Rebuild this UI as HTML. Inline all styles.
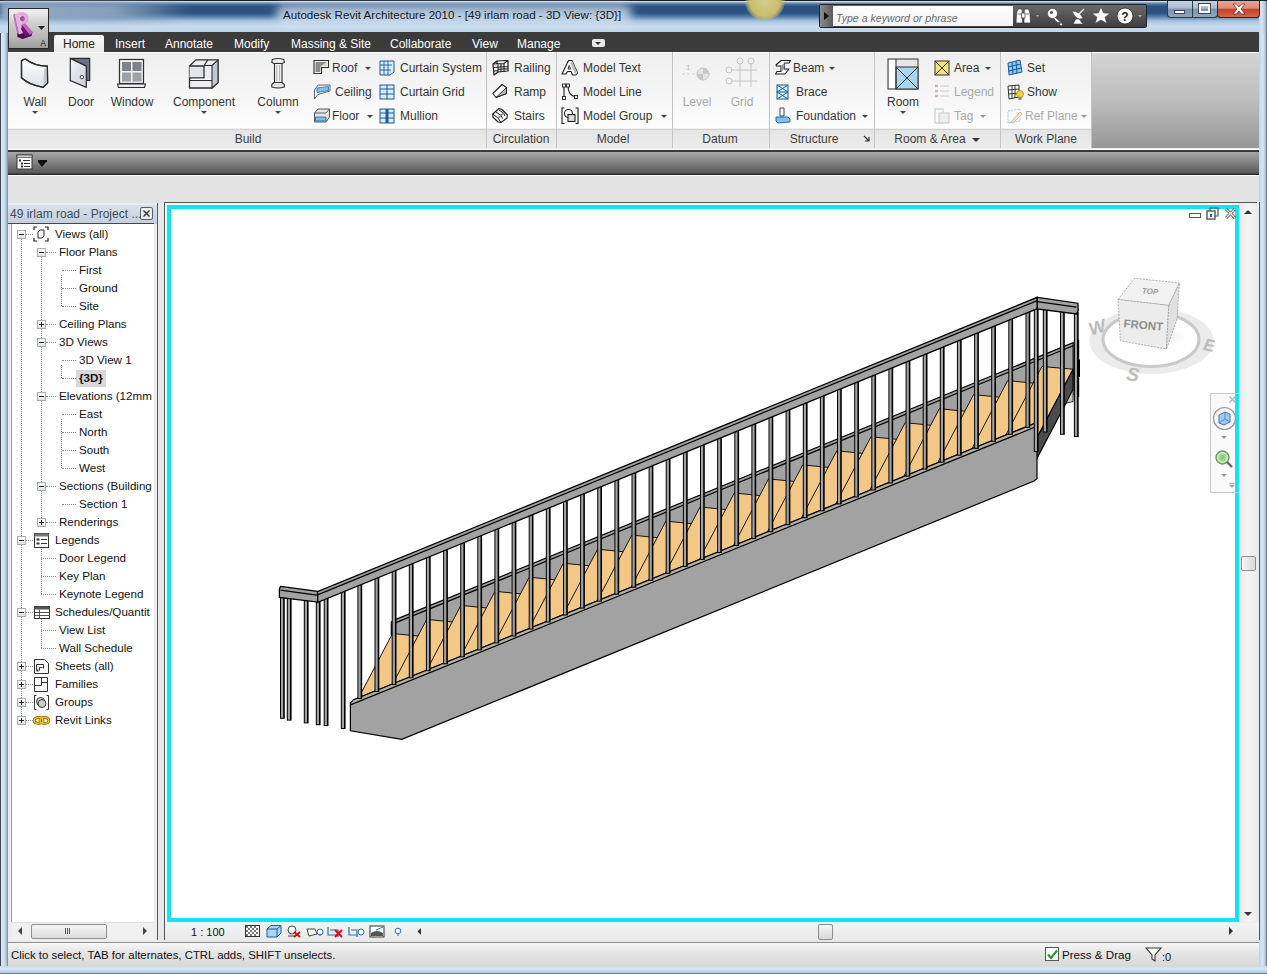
<!DOCTYPE html>
<html><head><meta charset="utf-8"><title>Revit</title>
<style>
*{margin:0;padding:0;box-sizing:border-box}
html,body{width:1267px;height:974px;overflow:hidden;background:#aac4dd}
body{position:relative;font-family:"Liberation Sans",sans-serif;font-size:12px;color:#222}
.a{position:absolute}
.t{position:absolute;white-space:nowrap;line-height:14px}
#frame{left:0;top:0;width:1267px;height:974px;background:linear-gradient(90deg,#3a4a5c 0,#3a4a5c 1px,#dbe8f5 1px,#cfe0f0 4px,#9fbad6 7px,#5d6f82 8px,#b7cee6 8px,#b7cee6 1259px,#c8dcf0 1260px,#d6e6f5 1263px,#9db8d4 1266px,#3a4a5c 1267px)}
#fbot{left:0;top:966px;width:1267px;height:8px;background:linear-gradient(180deg,#c6daee 0,#d8e8f6 3px,#a9c4de 7px,#2c3a48 8px)}
#title{left:0;top:0;width:1267px;height:33px;background:linear-gradient(180deg,#141c26 0,#141c26 1px,#cfdbe8 1.5px,#6f8fb2 3px,#2d5482 6px,#285081 13px,#5c84ad 17px,#a8c3df 21px,#c7dbef 26px,#bed4eb 33px)}
#tabbar{left:8px;top:32px;width:1251px;height:20px;background:#3b3b3b}
#ribbon{left:8px;top:52px;width:1251px;height:97px;background:linear-gradient(180deg,#fdfdfd 0,#fdfdfd 1px,#d4d4d4 1px,#bdbdbd 50%,#969696 100%)}
#qat{left:8px;top:148px;width:1251px;height:28px;background:linear-gradient(180deg,#e4e4e4 0,#fbfbfb 1px,#fbfbfb 2px,#3a3a3a 2px,#3a3a3a 3.5px,#a6a6a6 4px,#8a8a8a 12px,#5a5a5a 25px,#2c2c2c 26px,#2c2c2c 27px,#fafafa 27px)}
#gray1{left:8px;top:176px;width:1251px;height:27px;background:#e3e3e3}
#main{left:8px;top:203px;width:1251px;height:739px;background:#e9e9e9}
#status{left:8px;top:942px;width:1251px;height:25px;background:linear-gradient(180deg,#f7f7f7,#e6e6e6 40%,#d8d8d8);border-top:1px solid #8f8f8f;border-bottom:1px solid #6b7b8b}
.tab{top:36px;color:#fff;font-size:12px}
.pnl{top:52px;height:96px;background:linear-gradient(180deg,#fdfdfd 0,#fdfdfd 1px,#efefef 1px,#f5f5f5 40%,#fdfdfd 76px,#e4e4e4 77px,#ececec 96px)}
.sep{top:52px;width:1px;height:96px;background:#c3c3c3}
.lbl{top:132px;color:#3d3d3d;font-size:12px;text-align:center}
.rb{color:#353535;font-size:12px}
.dis{color:#a9a9a9}
.arr{position:absolute;width:0;height:0;border-left:3px solid transparent;border-right:3px solid transparent;border-top:3px solid #444}
.tree{color:#111;font-size:11.6px}
</style></head><body>
<div id="frame" class="a"></div>
<div id="title" class="a"></div>
<div class="a" style="left:0;top:2px;width:190px;height:18px;background:linear-gradient(90deg,rgba(160,182,204,.9) 0,rgba(150,172,196,.85) 60%,rgba(120,150,185,0) 100%);filter:blur(3px)"></div>
<div class="a" style="left:745px;top:-17px;width:40px;height:37px;border-radius:50%;background:radial-gradient(circle,#d4cc8c 0,#c9bd6c 55%,rgba(200,190,110,0.3) 72%,rgba(200,190,110,0) 76%)"></div>
<div class="a" style="left:276px;top:5px;width:356px;height:19px;border-radius:9px;background:rgba(214,228,242,.8);filter:blur(5px)"></div>
<div class="t t" style="left:283px;top:8px;color:#1a1a1a;font-size:11.6px">Autodesk Revit Architecture 2010 - [49 irlam road - 3D View: {3D}]</div>
<div class="a" style="left:819px;top:4px;width:328px;height:24px;background:linear-gradient(180deg,#6a6a6a,#3e3e3e);border:1px solid #222;border-radius:2px"></div>
<div class="a" style="left:820px;top:5px;width:13px;height:22px;background:linear-gradient(90deg,#8c8c8c,#5a5a5a)"></div>
<div class="a" style="left:824px;top:12px;width:0;height:0;border-top:4px solid transparent;border-bottom:4px solid transparent;border-left:5px solid #111"></div>
<div class="a" style="left:833px;top:6px;width:180px;height:20px;background:linear-gradient(180deg,#ffffff,#f4f4f4)"></div>
<div class="t t" style="left:836px;top:10px;color:#6a6a6a;font-style:italic;font-size:10.6px;top:11px">Type a keyword or phrase</div>
<svg class="a" style="left:1013px;top:5px" width="133" height="22" viewBox="0 0 133 22">
<g fill="#fff" stroke="#333" stroke-width="0.7">
<path d="M3.5 8 L5 4 L9 4 L9.5 8 L9.5 18 L3 18 Z"/><path d="M17 8 L15.5 4 L11.5 4 L11 8 L11 18 L17.5 18 Z"/>
<rect x="8.5" y="8" width="3.5" height="5"/>
</g>
<path d="M4.5 9 L8 9 M12.5 9 L16 9" stroke="#777" stroke-width="1"/>
<path d="M23 10 l3 0 l-1.5 2 z" fill="#aaa"/>
<g fill="#fff" stroke="#333" stroke-width="0.6"><path d="M42 12 L50 19.5 L48 21 L46.5 19.5 L47.5 18 L46 17 L45 18 L40 13 Z"/><circle cx="39.5" cy="8.5" r="5"/></g>
<circle cx="38.5" cy="7.5" r="1.6" fill="#555"/>
<g fill="#fff" stroke="#333" stroke-width="0.5"><path d="M59 6 Q66 6 70 13 Q64 17 59 6 Z"/><path d="M63 14 L60 19 L70 19 L66 14 Z"/><path d="M66 9 L71 4" stroke="#fff" stroke-width="1.2"/></g>
<path d="M88 2 L90.6 8 L97 8.2 L92 12.2 L93.8 18.5 L88 15 L82.2 18.5 L84 12.2 L79 8.2 L85.4 8 Z" fill="#fff" stroke="#333" stroke-width="0.5"/>
<circle cx="112" cy="11" r="8" fill="#fff" stroke="#222" stroke-width="0.8"/>
<text x="112" y="15.5" font-family="Liberation Sans" font-weight="bold" font-size="12" text-anchor="middle" fill="#222">?</text>
<path d="M125 10 l4 0 l-2 2.5 z" fill="#aaa"/>
</svg>
<div class="a" style="left:1259px;top:0;width:8px;height:33px;background:linear-gradient(90deg,#c4d8ec,#d6e6f5 3px,#9db8d4 7px,#3a4a5c 8px);border-top:1px solid #141c26"></div>
<div class="a" style="left:1167px;top:1px;width:51px;height:17px;border:1px solid #2e3a48;border-top:none;border-radius:0 0 4px 4px;background:linear-gradient(180deg,#c4d2e0 0,#a9bbcf 45%,#7a92ac 50%,#8ea7c0 100%)"></div>
<div class="a" style="left:1192px;top:1px;width:1px;height:16px;background:#2e3a48"></div>
<div class="a" style="left:1217px;top:1px;width:43px;height:17px;border:1px solid #3a2420;border-top:none;border-radius:0 0 4px 4px;background:linear-gradient(180deg,#e8a595 0,#e08a78 45%,#c4402a 52%,#d4654c 100%)"></div>
<div class="a" style="left:1174px;top:10px;width:11px;height:4px;background:#fff;border:1px solid #445"></div>
<div class="a" style="left:1199px;top:4px;width:11px;height:9px;border:2px solid #fff;outline:1px solid #445"></div>
<svg class="a" style="left:1232px;top:3px" width="14" height="12"><path d="M1 1 L4.5 1 L7 4 L9.5 1 L13 1 L9 6 L13 11 L9.5 11 L7 8 L4.5 11 L1 11 L5 6 Z" fill="#fff" stroke="#5a2418" stroke-width="0.7"/></svg>
<div id="tabbar" class="a"></div>
<div class="a" style="left:54px;top:35px;width:50px;height:17px;background:linear-gradient(180deg,#f8f8f8,#e9e9e9);border-radius:2px 2px 0 0"></div>
<div class="t t tab" style="left:63px;top:37px;color:#222">Home</div>
<div class="t t tab" style="left:115px;top:37px;">Insert</div>
<div class="t t tab" style="left:165px;top:37px;">Annotate</div>
<div class="t t tab" style="left:234px;top:37px;">Modify</div>
<div class="t t tab" style="left:291px;top:37px;">Massing &amp; Site</div>
<div class="t t tab" style="left:390px;top:37px;">Collaborate</div>
<div class="t t tab" style="left:472px;top:37px;">View</div>
<div class="t t tab" style="left:517px;top:37px;">Manage</div>
<div class="a" style="left:592px;top:39px;width:13px;height:8px;background:#e8e8e8;border-radius:2px"></div>
<div class="a" style="left:595px;top:42px;width:0;height:0;border-left:3.5px solid transparent;border-right:3.5px solid transparent;border-top:3px solid #333"></div>
<div class="a" style="left:8px;top:8px;width:41px;height:41px;background:#262626"></div>
<div class="a" style="left:9px;top:9px;width:39px;height:39px;background:linear-gradient(180deg,#f0f0f0 0,#e6e6e6 6px,#cfcfcf 14px,#b9b9b9 28px,#9c9c9c 39px)"></div>
<svg class="a" style="left:9px;top:9px" width="39" height="39" viewBox="0 0 39 39">
<defs><filter id="bl" x="-30%" y="-30%" width="160%" height="160%"><feGaussianBlur stdDeviation="0.6"/></filter>
<linearGradient id="rg" x1="0" y1="0" x2="0.6" y2="1"><stop offset="0" stop-color="#f2c0ee"/><stop offset="0.4" stop-color="#d27ccb"/><stop offset="0.7" stop-color="#9a3a92"/><stop offset="1" stop-color="#5a1058"/></linearGradient></defs>
<g filter="url(#bl)" transform="translate(0.5,1)">
<path d="M7 17 L13 15 L23 22 L22 26 L13 29 L8 27 Z" fill="#4e0a4c"/>
<path d="M3.5 5 L5.5 3.5 L9.5 24 L7.5 23 Z" fill="#b878b4"/>
<path d="M5.5 3.5 L9.5 3 L13.5 23 L9.5 24.5 Z" fill="#eab0e6"/>
<path d="M8.5 2.6 L14 2.6 Q19.5 3.8 19 9 Q18.5 13.5 13.5 15.5 L11.5 11.5 Q15 10.5 14.8 7.8 Q14.3 6 11 6 Z" fill="#e6a4e0"/>
<ellipse cx="12.8" cy="8.6" rx="2.3" ry="2.7" fill="#9a5892"/>
<path d="M12 14.5 L16 13.5 L23.5 22.5 L20 25 Z" fill="#c462ba"/>
<path d="M12.5 16 L20 25 L15.5 26 L11.5 19 Z" fill="#6c1868"/>
</g>
<path d="M29 17 L36 17 L32.5 21 Z" fill="#2a2a2a"/>
<text x="34" y="37" font-family="Liberation Sans" font-size="8.5" fill="#1a1a1a" text-anchor="middle">A</text>
</svg>
<div id="ribbon" class="a"></div>
<div class="a pnl" style="left:8px;width:478px"></div>
<div class="a pnl" style="left:486px;width:70px"></div>
<div class="a pnl" style="left:556px;width:116px"></div>
<div class="a pnl" style="left:672px;width:97px"></div>
<div class="a pnl" style="left:769px;width:105px"></div>
<div class="a pnl" style="left:874px;width:126px"></div>
<div class="a pnl" style="left:1000px;width:91px"></div>
<div class="a sep" style="left:486px"></div>
<div class="a sep" style="left:556px"></div>
<div class="a sep" style="left:672px"></div>
<div class="a sep" style="left:769px"></div>
<div class="a sep" style="left:874px"></div>
<div class="a sep" style="left:1000px"></div>
<div class="a sep" style="left:1091px"></div>
<div class="a" style="left:8px;top:129px;width:1083px;height:1px;background:#d2d2d2"></div>
<div class="t lbl" style="left:188px;width:120px">Build</div>
<div class="t lbl" style="left:461px;width:120px">Circulation</div>
<div class="t lbl" style="left:553px;width:120px">Model</div>
<div class="t lbl" style="left:660px;width:120px">Datum</div>
<div class="t lbl" style="left:754px;width:120px">Structure</div>
<div class="t lbl" style="left:870px;width:120px">Room &amp; Area</div>
<div class="t lbl" style="left:986px;width:120px">Work Plane</div>
<div class="arr" style="left:972px;top:138px;border-left-width:4px;border-right-width:4px;border-top:4px solid #333"></div>
<svg class="a" style="left:863px;top:135px" width="8" height="8" viewBox="0 0 8 8"><path d="M1 1 L6 6 M6 2 L6 6 L2 6" stroke="#333" stroke-width="1.2" fill="none"/></svg>
<svg class="a" style="left:20px;top:57px" width="30" height="32" viewBox="0 0 30 32"><defs><linearGradient id="wg" x1="0" y1="0" x2="0" y2="1"><stop offset="0" stop-color="#ffffff"/><stop offset="1" stop-color="#dde0e6"/></linearGradient></defs><path d="M1.5 4 Q3 2 5.5 2.1 Q14 9 27.3 9.2 L27.6 25.9 L23.2 30.3 Q9 28 1.5 20.8 Z" fill="url(#wg)" stroke="#2e2e2e" stroke-width="1.3"/><path d="M24 13.3 L27.3 9.2 L27.6 25.9 L23.2 30.3 Z" fill="#c4c9d2"/><path d="M2.5 5.5 Q10 11 24 13.3" stroke="#fff" stroke-width="1" fill="none"/><path d="M1.5 4 Q3 2 5.5 2.1 Q14 9 27.3 9.2 L27.6 25.9 L23.2 30.3 Q9 28 1.5 20.8 Z" fill="none" stroke="#2e2e2e" stroke-width="1.3"/></svg>
<svg class="a" style="left:69px;top:57px" width="24" height="32" viewBox="0 0 24 32"><path d="M1.3 1.4 L20.7 1.4 L20.7 23.5 L17.6 23.5 L17.3 9.2 Z" fill="#6c7282" stroke="#2e2e2e" stroke-width="1.2"/><defs><linearGradient id="dg" x1="0" y1="0" x2="1" y2="1"><stop offset="0" stop-color="#f4f5f8"/><stop offset="1" stop-color="#c8ccd4"/></linearGradient></defs><path d="M1.3 1.4 L17.3 9.2 L17.3 30.3 L1.3 23.5 Z" fill="url(#dg)" stroke="#2e2e2e" stroke-width="1.2"/><circle cx="12.9" cy="20.1" r="1.7" fill="#fff" stroke="#333" stroke-width="0.9"/></svg>
<svg class="a" style="left:116px;top:57px" width="32" height="33" viewBox="0 0 32 33"><rect x="3.5" y="2.5" width="24" height="24" fill="#f2f2f2" stroke="#2e2e2e" stroke-width="1.2"/><rect x="6" y="5" width="9" height="9" fill="#7d828c"/><rect x="16.5" y="5" width="9" height="9" fill="#7d828c"/><rect x="6" y="15.5" width="9" height="9" fill="#9da2aa"/><rect x="16.5" y="15.5" width="9" height="9" fill="#9da2aa"/><path d="M1.5 27 L29.5 27 L28.5 30.5 L2.5 30.5 Z" fill="#eeeeee" stroke="#2e2e2e" stroke-width="1.1"/></svg>
<svg class="a" style="left:187px;top:57px" width="34" height="33" viewBox="0 0 34 33"><path d="M2.5 9 L8.9 2.9 L31 2.9 L31 25.6 L25 31 L2.5 31 Z" fill="#eceef2" stroke="#2e2e2e" stroke-width="1.3" stroke-linejoin="round"/><path d="M25 8.5 L31 2.9 L31 25.6 L25 31 Z" fill="#c3c8d0" stroke="#2e2e2e" stroke-width="1.1"/><path d="M17 8.5 L25 8.5" stroke="#2e2e2e" stroke-width="1.1"/><path d="M2.5 9 L17 9 L17 21 L2.5 21" fill="#e2e5ea" stroke="#2e2e2e" stroke-width="1.3"/><path d="M17 9 L20.6 2.9" stroke="#2e2e2e" stroke-width="1.1"/><path d="M2.5 23.5 L25 23.5" stroke="#2e2e2e" stroke-width="1"/><path d="M4 22.2 L24 22.2" stroke="#fff" stroke-width="1.2"/></svg>
<svg class="a" style="left:270px;top:57px" width="16" height="33" viewBox="0 0 16 33"><path d="M2.3 2.5 Q8 0.5 13.8 2.5 L14.3 5.5 L12 6.5 L4 6.5 L1.8 5.5 Z" fill="#f0f0f0" stroke="#2e2e2e" stroke-width="1.1"/><rect x="4.5" y="6.5" width="7.5" height="19" fill="#f6f6f6" stroke="#2e2e2e" stroke-width="1.1"/><path d="M6.8 8 L6.8 24 M9.6 8 L9.6 24" stroke="#9a9a9a" stroke-width="0.8"/><path d="M4 25.5 L12 25.5 L14.3 27.5 L14.3 30 Q8 32 1.8 30 L1.8 27.5 Z" fill="#e4e4e4" stroke="#2e2e2e" stroke-width="1.1"/></svg>
<div class="t rb" style="left:-5px;top:95px;width:80px;text-align:center">Wall</div>
<div class="arr" style="left:32px;top:111px;border-left-width:3px;border-right-width:3px;border-top:3px solid #444"></div>
<div class="t rb" style="left:41px;top:95px;width:80px;text-align:center">Door</div>
<div class="t rb" style="left:92px;top:95px;width:80px;text-align:center">Window</div>
<div class="t rb" style="left:164px;top:95px;width:80px;text-align:center">Component</div>
<div class="arr" style="left:201px;top:111px;border-left-width:3px;border-right-width:3px;border-top:3px solid #444"></div>
<div class="t rb" style="left:238px;top:95px;width:80px;text-align:center">Column</div>
<div class="arr" style="left:275px;top:111px;border-left-width:3px;border-right-width:3px;border-top:3px solid #444"></div>
<svg class="a" style="left:313px;top:59px" width="18" height="17" viewBox="0 0 18 17"><path d="M1 1.5 L15.5 1.5 L15.5 8.5 L8.5 8.5 L8.5 14.5 L1 14.5 Z" fill="#f4f4f4" stroke="#2e2e2e" stroke-width="1.1"/><path d="M2.5 3 L14 3 L7.5 7.5 L7 13 L2.5 13 Z" fill="#8a8a8a"/><path d="M14 3 L14 7 L7.5 7.5 Z" fill="#d8d8d8"/></svg>
<div class="t rb " style="left:332px;top:61px">Roof</div>
<div class="arr" style="left:365px;top:67px;border-left-width:3px;border-right-width:3px;border-top:3px solid #444"></div>
<svg class="a" style="left:313px;top:83px" width="18" height="17" viewBox="0 0 18 17"><path d="M1.5 7 L5 2 L17 2 L17 8 L5 11.5 L1.5 16 Z" fill="#f0f4f8" stroke="#555" stroke-width="0.9"/><path d="M4 5 L15.5 3.5 L15.5 7.5 L4 9.5 Z" fill="#6ab8ee" stroke="#1c5b9c" stroke-width="0.7"/><path d="M5 6 L15 4.5 M5 8 L15 6.5" stroke="#dff" stroke-width="0.5" stroke-dasharray="1 1"/></svg>
<div class="t rb " style="left:335px;top:85px">Ceiling</div>
<svg class="a" style="left:313px;top:107px" width="18" height="17" viewBox="0 0 18 17"><path d="M1.5 6 L5 2 L16.5 2 L16.5 10 L13 15 L1.5 15 Z" fill="#e4e4e4" stroke="#444" stroke-width="0.9"/><path d="M1.5 6 L13 6 L16.5 2" fill="none" stroke="#444" stroke-width="0.8"/><path d="M2.5 10 L13 10 L13 14 L2.5 14 Z" fill="#6ab8ee" stroke="#1c5b9c" stroke-width="0.7"/><path d="M3.5 12 L12 12" stroke="#dff" stroke-width="0.6" stroke-dasharray="1 1"/></svg>
<div class="t rb " style="left:332px;top:109px">Floor</div>
<div class="arr" style="left:367px;top:115px;border-left-width:3px;border-right-width:3px;border-top:3px solid #444"></div>
<svg class="a" style="left:378px;top:59px" width="18" height="17" viewBox="0 0 18 17"><path d="M2 2 L16 2 L16 13 L12 16 L2 16 Z" fill="#d8ecfa" stroke="#1c5b9c" stroke-width="1"/><path d="M2 6 L14 6 M2 11 L13 11 M6 2 L6 16 M10 2 L10 16" stroke="#1c5b9c" stroke-width="0.9"/></svg>
<div class="t rb " style="left:400px;top:61px">Curtain System</div>
<svg class="a" style="left:378px;top:83px" width="18" height="17" viewBox="0 0 18 17"><rect x="2" y="2" width="14" height="14" fill="#d8ecfa" stroke="#1c5b9c"/><path d="M2 6 L16 6 M2 11 L16 11 M9 2 L9 16" stroke="#1c5b9c"/></svg>
<div class="t rb " style="left:400px;top:85px">Curtain Grid</div>
<svg class="a" style="left:378px;top:107px" width="18" height="17" viewBox="0 0 18 17"><rect x="2" y="2" width="14" height="14" fill="#d8ecfa" stroke="#1c5b9c"/><path d="M2 6 L16 6 M2 11 L16 11" stroke="#1c5b9c"/><rect x="7.5" y="2" width="3" height="14" fill="#1c5b9c"/></svg>
<div class="t rb " style="left:400px;top:109px">Mullion</div>
<svg class="a" style="left:492px;top:59px" width="18" height="17" viewBox="0 0 18 17"><path d="M1 5 L5 2 L16 1.5 L16 12 L6 13 L2 16 Z" fill="#f6f6f6" stroke="#1e1e1e" stroke-width="1.2" stroke-linejoin="round"/><path d="M1 5 L12 4.5 L16 1.5 M5 2 L5 4.8 M12 4.5 L12 12.5 M6 5 L6 13 M9 4.7 L9 12.7 M6 8 L16 7.8 M2 8.5 L6 8 M2 12 L6 11.5 M6 10.3 L16 10" stroke="#1e1e1e" stroke-width="1.1" fill="none"/></svg>
<div class="t rb " style="left:514px;top:61px">Railing</div>
<svg class="a" style="left:492px;top:83px" width="18" height="17" viewBox="0 0 18 17"><path d="M0.8 10.5 L10 1.5 L14.5 4.5 L14.5 10.5 L4 14.5 Z" fill="#f8f8f8" stroke="#1e1e1e" stroke-width="1.1" stroke-linejoin="round"/><path d="M4 14.5 L14.5 4.5 L14.5 10.5 Z" fill="#b4b4b4" stroke="#1e1e1e" stroke-width="0.9"/></svg>
<div class="t rb " style="left:514px;top:85px">Ramp</div>
<svg class="a" style="left:492px;top:107px" width="18" height="17" viewBox="0 0 18 17"><path d="M0.8 7 L7 1.5 L10 2.5 L15.5 8 L15 11 L9 15.5 L6 15 L0.8 10 Z" fill="#f6f6f6" stroke="#1e1e1e" stroke-width="1.1" stroke-linejoin="round"/><path d="M0.8 7 L6 11 L9 15.5 M4 5 L9 8.5 L10.5 11.5 M7 3 L11.5 6 L13 9" stroke="#1e1e1e" stroke-width="1" fill="none"/><path d="M6 11 L9 8.5 M9 8.5 L11.5 6" stroke="#888" stroke-width="1.6"/></svg>
<div class="t rb " style="left:514px;top:109px">Stairs</div>
<svg class="a" style="left:561px;top:59px" width="18" height="17" viewBox="0 0 18 17"><path d="M1 15 L7.5 1.5 L11 1.5 L16.5 14 L14.5 16 L11.5 16 L10 12.5 L6.5 12.5 L5 15 Z" fill="#f8f8f8" stroke="#1e1e1e" stroke-width="1.1" stroke-linejoin="round"/><path d="M11 1.5 L16.5 14 L14.5 16 L9.5 4.5 Z" fill="#b8bcc4"/><path d="M7 10 L9.5 10 L8.2 6.5 Z" fill="#fff" stroke="#1e1e1e" stroke-width="0.9"/></svg>
<div class="t rb " style="left:583px;top:61px">Model Text</div>
<svg class="a" style="left:561px;top:83px" width="18" height="17" viewBox="0 0 18 17"><path d="M3 3 L3 14 M7 3 Q7 12 14.5 14" stroke="#1e1e1e" fill="none" stroke-width="1.1"/><rect x="1.5" y="1" width="3" height="3" fill="#fff" stroke="#1e1e1e" stroke-width="0.9"/><rect x="5.5" y="1" width="3" height="3" fill="#fff" stroke="#1e1e1e" stroke-width="0.9"/><rect x="1.5" y="13.5" width="3" height="3" fill="#fff" stroke="#1e1e1e" stroke-width="0.9"/><rect x="13.5" y="12.5" width="3" height="3" fill="#fff" stroke="#1e1e1e" stroke-width="0.9"/></svg>
<div class="t rb " style="left:583px;top:85px">Model Line</div>
<svg class="a" style="left:561px;top:107px" width="18" height="17" viewBox="0 0 18 17"><path d="M3.5 1 L1 1 L1 16.5 L3.5 16.5 M14.5 1 L17 1 L17 16.5 L14.5 16.5" stroke="#1e1e1e" fill="none" stroke-width="1.1"/><circle cx="7.5" cy="6.5" r="4" fill="#fff" stroke="#1e1e1e" stroke-width="1.1"/><rect x="7" y="7.5" width="7" height="7" fill="#dcdcdc" stroke="#1e1e1e" stroke-width="1.1"/></svg>
<div class="t rb " style="left:583px;top:109px">Model Group</div>
<div class="arr" style="left:661px;top:115px;border-left-width:3px;border-right-width:3px;border-top:3px solid #444"></div>
<svg class="a" style="left:682px;top:58px" width="32" height="30" viewBox="0 0 32 30"><text x="4" y="12" font-size="8" fill="#bbb" font-family="Liberation Sans">1</text><path d="M0 16 L30 16" stroke="#ccc" stroke-dasharray="3 2"/><circle cx="21" cy="16" r="6" fill="#e4e4e4" stroke="#c4c4c4"/><path d="M21 10 L21 16 L27 16 A6 6 0 0 0 21 10 Z M21 16 L15 16 A6 6 0 0 0 21 22 Z" fill="#c8c8c8"/></svg>
<svg class="a" style="left:725px;top:57px" width="34" height="32" viewBox="0 0 34 32"><circle cx="15" cy="4" r="3" fill="none" stroke="#c4c4c4"/><circle cx="26" cy="4" r="3" fill="none" stroke="#c4c4c4"/><circle cx="4" cy="13" r="3" fill="none" stroke="#c4c4c4"/><circle cx="4" cy="24" r="3" fill="none" stroke="#c4c4c4"/><path d="M15 7 L15 30 M26 7 L26 30 M7 13 L32 13 M7 24 L32 24" stroke="#c4c4c4"/></svg>
<div class="t rb dis" style="left:657px;top:95px;width:80px;text-align:center">Level</div>
<div class="t rb dis" style="left:702px;top:95px;width:80px;text-align:center">Grid</div>
<svg class="a" style="left:774px;top:59px" width="18" height="17" viewBox="0 0 18 17"><path d="M2 6 L7 1.5 L16.5 1.5 L15 4 L10.5 4 L10.5 10 L15 10 L11 15 L1.5 15 L3 12.5 L7 12.5 L7 7 L2.5 7 Z" fill="#f8f8f8" stroke="#1e1e1e" stroke-width="1.1" stroke-linejoin="round"/><path d="M7 7 L10.5 4 L10.5 10 L7 12.5 Z" fill="#8a9aaa"/></svg>
<div class="t rb " style="left:793px;top:61px">Beam</div>
<div class="arr" style="left:829px;top:67px;border-left-width:3px;border-right-width:3px;border-top:3px solid #444"></div>
<svg class="a" style="left:774px;top:83px" width="18" height="17" viewBox="0 0 18 17"><rect x="3" y="2" width="11" height="14" fill="#d8ecfa" stroke="#1c5b9c"/><path d="M3 9 L14 9 M3 2 L14 9 L3 16 M14 2 L3 9 L14 16" stroke="#1c5b9c" fill="none"/></svg>
<div class="t rb " style="left:796px;top:85px">Brace</div>
<svg class="a" style="left:774px;top:107px" width="18" height="17" viewBox="0 0 18 17"><path d="M6 1 L10 1 L10 9 L6 9 Z" fill="#fff" stroke="#333" stroke-width="0.9"/><path d="M2 10 L14 10 L16 12 L16 15 L4 16 L2 14 Z" fill="#7fc2ee" stroke="#1c5b9c" stroke-width="0.9"/></svg>
<div class="t rb " style="left:796px;top:109px">Foundation</div>
<div class="arr" style="left:862px;top:115px;border-left-width:3px;border-right-width:3px;border-top:3px solid #444"></div>
<svg class="a" style="left:886px;top:57px" width="34" height="34" viewBox="0 0 34 34"><rect x="2" y="2" width="30" height="30" fill="#e6e6e6" stroke="#333"/><rect x="10" y="10" width="22" height="22" fill="#a9d5ee" stroke="#333"/><path d="M10 10 L32 32 M32 10 L10 32 M10 2 L10 32" stroke="#333" fill="none"/><rect x="3" y="3" width="6" height="28" fill="#fff"/></svg>
<div class="t rb" style="left:863px;top:95px;width:80px;text-align:center">Room</div>
<div class="arr" style="left:900px;top:111px;border-left-width:3px;border-right-width:3px;border-top:3px solid #444"></div>
<svg class="a" style="left:933px;top:59px" width="18" height="17" viewBox="0 0 18 17"><rect x="2" y="2" width="14" height="14" fill="#f4e27a" stroke="#333"/><path d="M2 2 L16 16 M16 2 L2 16" stroke="#333"/></svg>
<div class="t rb " style="left:954px;top:61px">Area</div>
<div class="arr" style="left:985px;top:67px;border-left-width:3px;border-right-width:3px;border-top:3px solid #444"></div>
<svg class="a" style="left:933px;top:83px" width="18" height="17" viewBox="0 0 18 17"><path d="M2 3 L5 3 M2 8 L5 8 M2 13 L5 13" stroke="#e0b0b0" stroke-width="2.5"/><path d="M7 3 L16 3 M7 8 L16 8 M7 13 L16 13" stroke="#c8c8c8"/></svg>
<div class="t rb dis" style="left:954px;top:85px">Legend</div>
<svg class="a" style="left:933px;top:107px" width="18" height="17" viewBox="0 0 18 17"><rect x="2" y="2" width="8" height="14" fill="none" stroke="#c4c4c4"/><rect x="6" y="6" width="10" height="10" fill="#eee" stroke="#c4c4c4"/></svg>
<div class="t rb dis" style="left:954px;top:109px">Tag</div>
<div class="arr" style="left:980px;top:115px;border-left-width:3px;border-right-width:3px;border-top:3px solid #9a9a9a"></div>
<svg class="a" style="left:1006px;top:59px" width="18" height="17" viewBox="0 0 18 17"><path d="M2 4 L14 1 L16 13 L3 16 Z" fill="#8cc8ef" stroke="#1c5b9c"/><path d="M2 8 L15 5 M2.5 12 L15.5 9 M6 3 L7 15 M10 2 L11 14" stroke="#1c5b9c"/></svg>
<div class="t rb " style="left:1027px;top:61px">Set</div>
<svg class="a" style="left:1006px;top:83px" width="18" height="17" viewBox="0 0 18 17"><path d="M2 3 L13 2 L13 14 L3 16 Z" fill="#fff" stroke="#333"/><path d="M2 7 L13 6 M2 11 L13 10 M6 3 L6 15 M9 2 L9 15" stroke="#333"/><circle cx="14" cy="11" r="3.5" fill="#f6d23a" stroke="#b08000" stroke-width="0.7"/><rect x="12.5" y="14" width="3" height="3" fill="#888"/></svg>
<div class="t rb " style="left:1027px;top:85px">Show</div>
<svg class="a" style="left:1006px;top:107px" width="18" height="17" viewBox="0 0 18 17"><path d="M2 4 L14 2 L14 14 L2 16 Z" fill="none" stroke="#a8c8e0" stroke-dasharray="2 1"/><path d="M5 15 L14 5 L16 7 L7 16 Z" fill="#f0e8c8" stroke="#c8c0a0"/></svg>
<div class="t rb dis" style="left:1025px;top:109px">Ref Plane</div>
<div class="arr" style="left:1081px;top:115px;border-left-width:3px;border-right-width:3px;border-top:3px solid #9a9a9a"></div>
<div id="qat" class="a"></div>
<svg class="a" style="left:16px;top:154px" width="17" height="16" viewBox="0 0 17 16"><rect x="1" y="1" width="15" height="14" fill="#fff" stroke="#333"/><rect x="1" y="1" width="15" height="2.5" fill="#ccc" stroke="#333" stroke-width="0.6"/><rect x="3" y="5.5" width="2" height="2" fill="#333"/><rect x="5" y="8.5" width="2" height="2" fill="#333"/><rect x="5" y="11.5" width="2" height="2" fill="#333"/><path d="M7 6.5 L14 6.5 M8 9.5 L14 9.5 M8 12.5 L14 12.5" stroke="#333"/></svg>
<div class="a" style="left:38px;top:160px;width:9px;height:1.5px;background:#111"></div>
<div class="a" style="left:38px;top:162px;width:0;height:0;border-left:4.5px solid transparent;border-right:4.5px solid transparent;border-top:5px solid #111"></div>
<div id="gray1" class="a"></div>
<div id="main" class="a"></div>
<div class="a" style="left:8px;top:203px;width:150px;height:739px;background:#ececec"></div>
<div class="a" style="left:157px;top:203px;width:1px;height:737px;background:#5a5a5a"></div>
<div class="a" style="left:8px;top:205px;width:149px;height:19px;background:linear-gradient(180deg,#d9e1ea,#c4cfdb)"></div>
<div class="a" style="left:8px;top:223px;width:146px;height:1px;background:#404850"></div>
<div class="t t" style="left:10px;top:207px;color:#3e4c5c;font-size:12px">49 irlam road - Project ...</div>
<div class="a" style="left:140px;top:207px;width:13px;height:13px;border:1px solid #55606c;border-radius:2px;background:#e8edf2"></div>
<svg class="a" style="left:142px;top:209px" width="9" height="9" viewBox="0 0 9 9"><path d="M1.5 1.5 L7.5 7.5 M7.5 1.5 L1.5 7.5" stroke="#333" stroke-width="1.4"/></svg>
<div class="a" style="left:11px;top:224px;width:143px;height:698px;background:#fff;border-left:1px solid #a0a0a0"></div>
<div class="a" style="left:26px;top:234px;width:7px;height:1px;border-top:1px dotted #8a8a8a"></div>
<div class="a" style="left:46px;top:252px;width:10px;height:1px;border-top:1px dotted #8a8a8a"></div>
<div class="a" style="left:62px;top:270px;width:14px;height:1px;border-top:1px dotted #8a8a8a"></div>
<div class="a" style="left:62px;top:288px;width:14px;height:1px;border-top:1px dotted #8a8a8a"></div>
<div class="a" style="left:62px;top:306px;width:14px;height:1px;border-top:1px dotted #8a8a8a"></div>
<div class="a" style="left:46px;top:324px;width:10px;height:1px;border-top:1px dotted #8a8a8a"></div>
<div class="a" style="left:46px;top:342px;width:10px;height:1px;border-top:1px dotted #8a8a8a"></div>
<div class="a" style="left:62px;top:360px;width:14px;height:1px;border-top:1px dotted #8a8a8a"></div>
<div class="a" style="left:62px;top:378px;width:14px;height:1px;border-top:1px dotted #8a8a8a"></div>
<div class="a" style="left:46px;top:396px;width:10px;height:1px;border-top:1px dotted #8a8a8a"></div>
<div class="a" style="left:62px;top:414px;width:14px;height:1px;border-top:1px dotted #8a8a8a"></div>
<div class="a" style="left:62px;top:432px;width:14px;height:1px;border-top:1px dotted #8a8a8a"></div>
<div class="a" style="left:62px;top:450px;width:14px;height:1px;border-top:1px dotted #8a8a8a"></div>
<div class="a" style="left:62px;top:468px;width:14px;height:1px;border-top:1px dotted #8a8a8a"></div>
<div class="a" style="left:46px;top:486px;width:10px;height:1px;border-top:1px dotted #8a8a8a"></div>
<div class="a" style="left:62px;top:504px;width:14px;height:1px;border-top:1px dotted #8a8a8a"></div>
<div class="a" style="left:46px;top:522px;width:10px;height:1px;border-top:1px dotted #8a8a8a"></div>
<div class="a" style="left:26px;top:540px;width:7px;height:1px;border-top:1px dotted #8a8a8a"></div>
<div class="a" style="left:41px;top:558px;width:15px;height:1px;border-top:1px dotted #8a8a8a"></div>
<div class="a" style="left:41px;top:576px;width:15px;height:1px;border-top:1px dotted #8a8a8a"></div>
<div class="a" style="left:41px;top:594px;width:15px;height:1px;border-top:1px dotted #8a8a8a"></div>
<div class="a" style="left:26px;top:612px;width:7px;height:1px;border-top:1px dotted #8a8a8a"></div>
<div class="a" style="left:41px;top:630px;width:15px;height:1px;border-top:1px dotted #8a8a8a"></div>
<div class="a" style="left:41px;top:648px;width:15px;height:1px;border-top:1px dotted #8a8a8a"></div>
<div class="a" style="left:26px;top:666px;width:7px;height:1px;border-top:1px dotted #8a8a8a"></div>
<div class="a" style="left:26px;top:684px;width:7px;height:1px;border-top:1px dotted #8a8a8a"></div>
<div class="a" style="left:26px;top:702px;width:7px;height:1px;border-top:1px dotted #8a8a8a"></div>
<div class="a" style="left:26px;top:720px;width:7px;height:1px;border-top:1px dotted #8a8a8a"></div>
<div class="a" style="left:21px;top:239px;width:1px;height:481px;border-left:1px dotted #8a8a8a"></div>
<div class="a" style="left:41px;top:257px;width:1px;height:265px;border-left:1px dotted #8a8a8a"></div>
<div class="a" style="left:61px;top:275px;width:1px;height:31px;border-left:1px dotted #8a8a8a"></div>
<div class="a" style="left:61px;top:365px;width:1px;height:13px;border-left:1px dotted #8a8a8a"></div>
<div class="a" style="left:61px;top:419px;width:1px;height:49px;border-left:1px dotted #8a8a8a"></div>
<div class="a" style="left:61px;top:509px;width:1px;height:-4px;border-left:1px dotted #8a8a8a"></div>
<div class="a" style="left:41px;top:545px;width:1px;height:49px;border-left:1px dotted #8a8a8a"></div>
<div class="a" style="left:41px;top:617px;width:1px;height:31px;border-left:1px dotted #8a8a8a"></div>
<div class="a" style="left:17px;top:230px;width:9px;height:9px;border:1px solid #a4acb4;background:linear-gradient(180deg,#fff,#dfe3e8)"></div>
<div class="a" style="left:19px;top:234px;width:5px;height:1px;background:#222"></div>
<div class="t t tree" style="left:55px;top:227px;">Views (all)</div>
<svg class="a" style="left:33px;top:226px" width="17" height="17" viewBox="0 0 17 17"><path d="M1 4 L1 1 L4 1 M12 1 L15 1 L15 4 M15 12 L15 15 L12 15 M4 15 L1 15 L1 12" stroke="#222" fill="none" stroke-width="1.2"/><path d="M5 6 L7 4 L11 4 L11 10 L9 12 L5 12 Z" fill="#fff" stroke="#222"/></svg>
<div class="a" style="left:37px;top:248px;width:9px;height:9px;border:1px solid #a4acb4;background:linear-gradient(180deg,#fff,#dfe3e8)"></div>
<div class="a" style="left:39px;top:252px;width:5px;height:1px;background:#222"></div>
<div class="t t tree" style="left:59px;top:245px;">Floor Plans</div>
<div class="t t tree" style="left:79px;top:263px;">First</div>
<div class="t t tree" style="left:79px;top:281px;">Ground</div>
<div class="t t tree" style="left:79px;top:299px;">Site</div>
<div class="a" style="left:37px;top:320px;width:9px;height:9px;border:1px solid #a4acb4;background:linear-gradient(180deg,#fff,#dfe3e8)"></div>
<div class="a" style="left:39px;top:324px;width:5px;height:1px;background:#222"></div>
<div class="a" style="left:41px;top:322px;width:1px;height:5px;background:#222"></div>
<div class="t t tree" style="left:59px;top:317px;">Ceiling Plans</div>
<div class="a" style="left:37px;top:338px;width:9px;height:9px;border:1px solid #a4acb4;background:linear-gradient(180deg,#fff,#dfe3e8)"></div>
<div class="a" style="left:39px;top:342px;width:5px;height:1px;background:#222"></div>
<div class="t t tree" style="left:59px;top:335px;">3D Views</div>
<div class="t t tree" style="left:79px;top:353px;">3D View 1</div>
<div class="a" style="left:76px;top:370px;width:30px;height:17px;background:#d8d8d8"></div>
<div class="t t tree" style="left:79px;top:371px;font-weight:bold">{3D}</div>
<div class="a" style="left:37px;top:392px;width:9px;height:9px;border:1px solid #a4acb4;background:linear-gradient(180deg,#fff,#dfe3e8)"></div>
<div class="a" style="left:39px;top:396px;width:5px;height:1px;background:#222"></div>
<div class="t t tree" style="left:59px;top:389px;">Elevations (12mm</div>
<div class="t t tree" style="left:79px;top:407px;">East</div>
<div class="t t tree" style="left:79px;top:425px;">North</div>
<div class="t t tree" style="left:79px;top:443px;">South</div>
<div class="t t tree" style="left:79px;top:461px;">West</div>
<div class="a" style="left:37px;top:482px;width:9px;height:9px;border:1px solid #a4acb4;background:linear-gradient(180deg,#fff,#dfe3e8)"></div>
<div class="a" style="left:39px;top:486px;width:5px;height:1px;background:#222"></div>
<div class="t t tree" style="left:59px;top:479px;">Sections (Building</div>
<div class="t t tree" style="left:79px;top:497px;">Section 1</div>
<div class="a" style="left:37px;top:518px;width:9px;height:9px;border:1px solid #a4acb4;background:linear-gradient(180deg,#fff,#dfe3e8)"></div>
<div class="a" style="left:39px;top:522px;width:5px;height:1px;background:#222"></div>
<div class="a" style="left:41px;top:520px;width:1px;height:5px;background:#222"></div>
<div class="t t tree" style="left:59px;top:515px;">Renderings</div>
<div class="a" style="left:17px;top:536px;width:9px;height:9px;border:1px solid #a4acb4;background:linear-gradient(180deg,#fff,#dfe3e8)"></div>
<div class="a" style="left:19px;top:540px;width:5px;height:1px;background:#222"></div>
<div class="t t tree" style="left:55px;top:533px;">Legends</div>
<svg class="a" style="left:33px;top:532px" width="17" height="17" viewBox="0 0 17 17"><rect x="1.5" y="1.5" width="14" height="14" fill="#fff" stroke="#333"/><rect x="1.5" y="1.5" width="14" height="3" fill="#777"/><rect x="3.5" y="6.5" width="3" height="2" fill="#333"/><rect x="3.5" y="10.5" width="3" height="2" fill="#333"/><path d="M8 7.5 L14 7.5 M8 11.5 L14 11.5" stroke="#333"/></svg>
<div class="t t tree" style="left:59px;top:551px;">Door Legend</div>
<div class="t t tree" style="left:59px;top:569px;">Key Plan</div>
<div class="t t tree" style="left:59px;top:587px;">Keynote Legend</div>
<div class="a" style="left:17px;top:608px;width:9px;height:9px;border:1px solid #a4acb4;background:linear-gradient(180deg,#fff,#dfe3e8)"></div>
<div class="a" style="left:19px;top:612px;width:5px;height:1px;background:#222"></div>
<div class="t t tree" style="left:55px;top:605px;">Schedules/Quantit</div>
<svg class="a" style="left:33px;top:604px" width="17" height="17" viewBox="0 0 17 17"><rect x="1.5" y="2.5" width="15" height="12" fill="#fff" stroke="#333"/><rect x="1.5" y="2.5" width="15" height="3" fill="#555"/><path d="M1.5 8.5 L16.5 8.5 M1.5 11.5 L16.5 11.5 M6.5 5.5 L6.5 14.5" stroke="#555"/></svg>
<div class="t t tree" style="left:59px;top:623px;">View List</div>
<div class="t t tree" style="left:59px;top:641px;">Wall Schedule</div>
<div class="a" style="left:17px;top:662px;width:9px;height:9px;border:1px solid #a4acb4;background:linear-gradient(180deg,#fff,#dfe3e8)"></div>
<div class="a" style="left:19px;top:666px;width:5px;height:1px;background:#222"></div>
<div class="a" style="left:21px;top:664px;width:1px;height:5px;background:#222"></div>
<div class="t t tree" style="left:55px;top:659px;">Sheets (all)</div>
<svg class="a" style="left:33px;top:658px" width="17" height="17" viewBox="0 0 17 17"><path d="M1.5 1.5 L11.5 1.5 L15.5 5.5 L15.5 15.5 L1.5 15.5 Z" fill="#fff" stroke="#333"/><path d="M3.5 12.5 L3.5 6.5 L10.5 6.5 L10.5 10.5 M6.5 12.5 L6.5 9.5 L9.5 9.5" fill="none" stroke="#333"/><rect x="3.5" y="11.5" width="2" height="2" fill="#333"/></svg>
<div class="a" style="left:17px;top:680px;width:9px;height:9px;border:1px solid #a4acb4;background:linear-gradient(180deg,#fff,#dfe3e8)"></div>
<div class="a" style="left:19px;top:684px;width:5px;height:1px;background:#222"></div>
<div class="a" style="left:21px;top:682px;width:1px;height:5px;background:#222"></div>
<div class="t t tree" style="left:55px;top:677px;">Families</div>
<svg class="a" style="left:33px;top:676px" width="17" height="17" viewBox="0 0 17 17"><path d="M1.5 1.5 L14.5 1.5 L14.5 15.5 L1.5 15.5 Z" fill="#fff" stroke="#333"/><path d="M1.5 9.5 L8.5 9.5 L8.5 1.5 M8.5 6.5 L14.5 6.5" stroke="#333" fill="none"/></svg>
<div class="a" style="left:17px;top:698px;width:9px;height:9px;border:1px solid #a4acb4;background:linear-gradient(180deg,#fff,#dfe3e8)"></div>
<div class="a" style="left:19px;top:702px;width:5px;height:1px;background:#222"></div>
<div class="a" style="left:21px;top:700px;width:1px;height:5px;background:#222"></div>
<div class="t t tree" style="left:55px;top:695px;">Groups</div>
<svg class="a" style="left:33px;top:694px" width="17" height="17" viewBox="0 0 17 17"><path d="M3.5 1.5 L1.5 1.5 L1.5 15.5 L3.5 15.5 M13.5 1.5 L15.5 1.5 L15.5 15.5 L13.5 15.5" stroke="#333" fill="none"/><circle cx="7.5" cy="7.5" r="4" fill="#ddd" stroke="#333"/><circle cx="9" cy="9.5" r="4" fill="#ccc" stroke="#333"/></svg>
<div class="a" style="left:17px;top:716px;width:9px;height:9px;border:1px solid #a4acb4;background:linear-gradient(180deg,#fff,#dfe3e8)"></div>
<div class="a" style="left:19px;top:720px;width:5px;height:1px;background:#222"></div>
<div class="a" style="left:21px;top:718px;width:1px;height:5px;background:#222"></div>
<div class="t t tree" style="left:55px;top:713px;">Revit Links</div>
<svg class="a" style="left:33px;top:712px" width="17" height="17" viewBox="0 0 17 17"><ellipse cx="5.5" cy="8.5" rx="4.5" ry="3" fill="none" stroke="#7a6000" stroke-width="3"/><ellipse cx="11.5" cy="8.5" rx="4.5" ry="3" fill="none" stroke="#7a6000" stroke-width="3"/><ellipse cx="5.5" cy="8.5" rx="4.5" ry="3" fill="none" stroke="#f0c020" stroke-width="1.6"/><ellipse cx="11.5" cy="8.5" rx="4.5" ry="3" fill="none" stroke="#f0c020" stroke-width="1.6"/></svg>
<div class="a" style="left:12px;top:922px;width:142px;height:18px;background:#f0f0f0;border-top:1px solid #e0e0e0"></div>
<div class="a" style="left:18px;top:927px;width:0;height:0;border-top:4px solid transparent;border-bottom:4px solid transparent;border-right:4px solid #444"></div>
<div class="a" style="left:143px;top:927px;width:0;height:0;border-top:4px solid transparent;border-bottom:4px solid transparent;border-left:4px solid #444"></div>
<div class="a" style="left:31px;top:924px;width:76px;height:15px;border:1px solid #8e8e8e;border-radius:2px;background:linear-gradient(180deg,#f6f6f6,#dcdcdc)"></div>
<div class="a" style="left:65px;top:928px;width:1px;height:6px;background:#555;box-shadow:2px 0 0 #555,4px 0 0 #555"></div>
<div class="a" style="left:164px;top:202px;width:1095px;height:739px;background:#ececec"></div>
<div class="a" style="left:164px;top:202px;width:1093px;height:1px;background:#555"></div>
<div class="a" style="left:164px;top:202px;width:1px;height:738px;background:#555"></div>
<div class="a" style="left:1259px;top:202px;width:1px;height:738px;background:#555"></div>
<div class="a" style="left:165px;top:203px;width:1074px;height:720px;background:#e6fcff"></div>
<div class="a" style="left:167px;top:205px;width:1072px;height:717px;background:#12e4f4"></div>
<div class="a" style="left:171px;top:209px;width:1064px;height:709px;background:#fff"></div>
<svg class="a" style="left:0;top:0" width="1267" height="974" viewBox="0 0 1267 974"><polygon points="391.3,634.4 391.3,622.0 393.5,620.4 1073.2,342.6 1073.2,373.5 1072.7,393.0 1073.1,394.5 422.5,663.5" fill="#a2a2a2" stroke="#000" stroke-width="1.2"/>
<line x1="393.5" y1="623.6" x2="1073.2" y2="345.8" stroke="#000" stroke-width="1.2"/>
<polygon points="392.5,633.5 426.7,636.9 384.7,716.6 350.5,713.2" fill="#f3c886" stroke="#000" stroke-width="0.9"/>
<polygon points="426.7,619.4 460.9,622.8 418.9,702.6 384.7,699.2" fill="#f3c886" stroke="#000" stroke-width="0.9"/>
<polygon points="460.9,605.4 495.0,608.8 453.0,688.5 418.9,685.1" fill="#f3c886" stroke="#000" stroke-width="0.9"/>
<polygon points="495.0,591.3 529.2,594.7 487.2,674.5 453.0,671.1" fill="#f3c886" stroke="#000" stroke-width="0.9"/>
<polygon points="529.2,577.2 563.4,580.6 521.4,660.4 487.2,657.0" fill="#f3c886" stroke="#000" stroke-width="0.9"/>
<polygon points="563.4,563.2 597.6,566.6 555.6,646.4 521.4,643.0" fill="#f3c886" stroke="#000" stroke-width="0.9"/>
<polygon points="597.6,549.2 631.8,552.6 589.8,632.4 555.6,629.0" fill="#f3c886" stroke="#000" stroke-width="0.9"/>
<polygon points="631.8,535.1 665.9,538.5 623.9,618.3 589.8,614.9" fill="#f3c886" stroke="#000" stroke-width="0.9"/>
<polygon points="665.9,521.1 700.1,524.5 658.1,604.2 623.9,600.9" fill="#f3c886" stroke="#000" stroke-width="0.9"/>
<polygon points="700.1,507.0 734.3,510.4 692.3,590.2 658.1,586.8" fill="#f3c886" stroke="#000" stroke-width="0.9"/>
<polygon points="734.3,493.0 768.5,496.4 726.5,576.1 692.3,572.8" fill="#f3c886" stroke="#000" stroke-width="0.9"/>
<polygon points="768.5,478.9 802.7,482.3 760.7,562.1 726.5,558.7" fill="#f3c886" stroke="#000" stroke-width="0.9"/>
<polygon points="802.7,464.9 836.8,468.2 794.8,548.0 760.7,544.6" fill="#f3c886" stroke="#000" stroke-width="0.9"/>
<polygon points="836.8,450.8 871.0,454.2 829.0,534.0 794.8,530.6" fill="#f3c886" stroke="#000" stroke-width="0.9"/>
<polygon points="871.0,436.8 905.2,440.1 863.2,519.9 829.0,516.5" fill="#f3c886" stroke="#000" stroke-width="0.9"/>
<polygon points="905.2,422.7 939.4,426.1 897.4,505.9 863.2,502.5" fill="#f3c886" stroke="#000" stroke-width="0.9"/>
<polygon points="939.4,408.7 973.6,412.1 931.6,491.9 897.4,488.5" fill="#f3c886" stroke="#000" stroke-width="0.9"/>
<polygon points="973.6,394.6 1007.7,398.0 965.7,477.8 931.6,474.4" fill="#f3c886" stroke="#000" stroke-width="0.9"/>
<polygon points="1007.7,380.6 1041.9,384.0 999.9,463.8 965.7,460.4" fill="#f3c886" stroke="#000" stroke-width="0.9"/>
<polygon points="1041.9,366.5 1073.1,369.2 1031.1,449.0 999.9,446.3" fill="#f3c886" stroke="#000" stroke-width="0.9"/>
<polygon points="1073.1,369.2 1031.1,449.0 1031.1,469.5 1073.1,389.7" fill="#4b4b4b" stroke="#000" stroke-width="1.2"/>
<polygon points="1073.1,389.7 1073.1,401.5 1066.0,403.2" fill="#c8c8c8" stroke="#000" stroke-width="0.8"/>
<polygon points="350.4,702.7 353.7,699.8 1037.0,422.5 1037.0,478.6 1034.0,481.0 401.8,739.4 350.4,730.8" fill="#a2a2a2" stroke="#000" stroke-width="1.2"/>
<polygon points="353.7,699.8 1037,422.5 1037,426.3 351,704.6" fill="#b6b2a4"/>
<line x1="353.7" y1="699.8" x2="1037" y2="422.5" stroke="#000" stroke-width="1.2"/>
<line x1="351" y1="704.6" x2="1037" y2="426.3" stroke="#000" stroke-width="1.2"/>
<rect x="280.0" y="595.4" width="4.8" height="123.4" fill="#000"/>
<rect x="281.0" y="595.4" width="2.2" height="122.4" fill="#a2a2a2"/>
<rect x="286.8" y="596.2" width="4.8" height="124.4" fill="#000"/>
<rect x="287.8" y="596.2" width="2.2" height="123.4" fill="#a2a2a2"/>
<rect x="303.8" y="598.3" width="4.8" height="125.1" fill="#000"/>
<rect x="304.8" y="598.3" width="2.2" height="124.1" fill="#a2a2a2"/>
<rect x="315.8" y="599.8" width="4.8" height="125.4" fill="#000"/>
<rect x="316.8" y="599.8" width="2.2" height="124.4" fill="#a2a2a2"/>
<rect x="323.7" y="597.1" width="4.8" height="128.9" fill="#000"/>
<rect x="324.7" y="597.1" width="2.2" height="127.9" fill="#a2a2a2"/>
<rect x="340.8" y="590.1" width="4.8" height="138.9" fill="#000"/>
<rect x="341.8" y="590.1" width="2.2" height="137.9" fill="#a2a2a2"/>
<rect x="357.4" y="583.3" width="4.8" height="115.7" fill="#000"/>
<rect x="358.4" y="583.3" width="2.2" height="114.7" fill="#a2a2a2"/>
<rect x="374.5" y="576.3" width="4.8" height="115.7" fill="#000"/>
<rect x="375.5" y="576.3" width="2.2" height="114.7" fill="#a2a2a2"/>
<rect x="391.7" y="569.3" width="4.8" height="115.8" fill="#000"/>
<rect x="392.7" y="569.3" width="2.2" height="114.8" fill="#a2a2a2"/>
<rect x="408.8" y="562.3" width="4.8" height="115.9" fill="#000"/>
<rect x="409.8" y="562.3" width="2.2" height="114.9" fill="#a2a2a2"/>
<rect x="425.9" y="555.3" width="4.8" height="115.9" fill="#000"/>
<rect x="426.9" y="555.3" width="2.2" height="114.9" fill="#a2a2a2"/>
<rect x="443.1" y="548.3" width="4.8" height="116.0" fill="#000"/>
<rect x="444.1" y="548.3" width="2.2" height="115.0" fill="#a2a2a2"/>
<rect x="460.2" y="541.3" width="4.8" height="116.0" fill="#000"/>
<rect x="461.2" y="541.3" width="2.2" height="115.0" fill="#a2a2a2"/>
<rect x="477.3" y="534.3" width="4.8" height="116.1" fill="#000"/>
<rect x="478.3" y="534.3" width="2.2" height="115.1" fill="#a2a2a2"/>
<rect x="494.4" y="527.3" width="4.8" height="116.1" fill="#000"/>
<rect x="495.4" y="527.3" width="2.2" height="115.1" fill="#a2a2a2"/>
<rect x="511.6" y="520.3" width="4.8" height="116.2" fill="#000"/>
<rect x="512.6" y="520.3" width="2.2" height="115.2" fill="#a2a2a2"/>
<rect x="528.7" y="513.3" width="4.8" height="116.2" fill="#000"/>
<rect x="529.7" y="513.3" width="2.2" height="115.2" fill="#a2a2a2"/>
<rect x="545.8" y="506.2" width="4.8" height="116.3" fill="#000"/>
<rect x="546.8" y="506.2" width="2.2" height="115.3" fill="#a2a2a2"/>
<rect x="563.0" y="499.2" width="4.8" height="116.3" fill="#000"/>
<rect x="564.0" y="499.2" width="2.2" height="115.3" fill="#a2a2a2"/>
<rect x="580.1" y="492.2" width="4.8" height="116.4" fill="#000"/>
<rect x="581.1" y="492.2" width="2.2" height="115.4" fill="#a2a2a2"/>
<rect x="597.2" y="485.2" width="4.8" height="116.4" fill="#000"/>
<rect x="598.2" y="485.2" width="2.2" height="115.4" fill="#a2a2a2"/>
<rect x="614.4" y="478.2" width="4.8" height="116.5" fill="#000"/>
<rect x="615.4" y="478.2" width="2.2" height="115.5" fill="#a2a2a2"/>
<rect x="631.5" y="471.2" width="4.8" height="116.5" fill="#000"/>
<rect x="632.5" y="471.2" width="2.2" height="115.5" fill="#a2a2a2"/>
<rect x="648.6" y="464.2" width="4.8" height="116.6" fill="#000"/>
<rect x="649.6" y="464.2" width="2.2" height="115.6" fill="#a2a2a2"/>
<rect x="665.7" y="457.2" width="4.8" height="116.6" fill="#000"/>
<rect x="666.7" y="457.2" width="2.2" height="115.6" fill="#a2a2a2"/>
<rect x="682.9" y="450.2" width="4.8" height="116.7" fill="#000"/>
<rect x="683.9" y="450.2" width="2.2" height="115.7" fill="#a2a2a2"/>
<rect x="700.0" y="443.2" width="4.8" height="116.7" fill="#000"/>
<rect x="701.0" y="443.2" width="2.2" height="115.7" fill="#a2a2a2"/>
<rect x="717.1" y="436.2" width="4.8" height="116.8" fill="#000"/>
<rect x="718.1" y="436.2" width="2.2" height="115.8" fill="#a2a2a2"/>
<rect x="734.3" y="429.2" width="4.8" height="116.8" fill="#000"/>
<rect x="735.3" y="429.2" width="2.2" height="115.8" fill="#a2a2a2"/>
<rect x="751.4" y="422.2" width="4.8" height="116.9" fill="#000"/>
<rect x="752.4" y="422.2" width="2.2" height="115.9" fill="#a2a2a2"/>
<rect x="768.5" y="415.2" width="4.8" height="117.0" fill="#000"/>
<rect x="769.5" y="415.2" width="2.2" height="116.0" fill="#a2a2a2"/>
<rect x="785.6" y="408.2" width="4.8" height="117.0" fill="#000"/>
<rect x="786.6" y="408.2" width="2.2" height="116.0" fill="#a2a2a2"/>
<rect x="802.8" y="401.2" width="4.8" height="117.1" fill="#000"/>
<rect x="803.8" y="401.2" width="2.2" height="116.1" fill="#a2a2a2"/>
<rect x="819.9" y="394.2" width="4.8" height="117.1" fill="#000"/>
<rect x="820.9" y="394.2" width="2.2" height="116.1" fill="#a2a2a2"/>
<rect x="837.0" y="387.2" width="4.8" height="117.2" fill="#000"/>
<rect x="838.0" y="387.2" width="2.2" height="116.2" fill="#a2a2a2"/>
<rect x="854.2" y="380.2" width="4.8" height="117.2" fill="#000"/>
<rect x="855.2" y="380.2" width="2.2" height="116.2" fill="#a2a2a2"/>
<rect x="871.3" y="373.2" width="4.8" height="117.3" fill="#000"/>
<rect x="872.3" y="373.2" width="2.2" height="116.3" fill="#a2a2a2"/>
<rect x="888.4" y="366.2" width="4.8" height="117.3" fill="#000"/>
<rect x="889.4" y="366.2" width="2.2" height="116.3" fill="#a2a2a2"/>
<rect x="905.6" y="359.2" width="4.8" height="117.4" fill="#000"/>
<rect x="906.6" y="359.2" width="2.2" height="116.4" fill="#a2a2a2"/>
<rect x="922.7" y="352.2" width="4.8" height="117.4" fill="#000"/>
<rect x="923.7" y="352.2" width="2.2" height="116.4" fill="#a2a2a2"/>
<rect x="939.8" y="345.2" width="4.8" height="117.5" fill="#000"/>
<rect x="940.8" y="345.2" width="2.2" height="116.5" fill="#a2a2a2"/>
<rect x="956.9" y="338.2" width="4.8" height="117.5" fill="#000"/>
<rect x="957.9" y="338.2" width="2.2" height="116.5" fill="#a2a2a2"/>
<rect x="974.1" y="331.2" width="4.8" height="117.6" fill="#000"/>
<rect x="975.1" y="331.2" width="2.2" height="116.6" fill="#a2a2a2"/>
<rect x="991.2" y="324.2" width="4.8" height="117.6" fill="#000"/>
<rect x="992.2" y="324.2" width="2.2" height="116.6" fill="#a2a2a2"/>
<rect x="1008.3" y="317.1" width="4.8" height="117.7" fill="#000"/>
<rect x="1009.3" y="317.1" width="2.2" height="116.7" fill="#a2a2a2"/>
<rect x="1025.5" y="310.1" width="4.8" height="117.7" fill="#000"/>
<rect x="1026.5" y="310.1" width="2.2" height="116.7" fill="#a2a2a2"/>
<rect x="1033.8" y="306.7" width="4.8" height="145.3" fill="#000"/>
<rect x="1034.8" y="306.7" width="2.2" height="144.3" fill="#a2a2a2"/>
<rect x="1042.8" y="307.6" width="4.8" height="124.9" fill="#000"/>
<rect x="1043.8" y="307.6" width="2.2" height="123.9" fill="#a2a2a2"/>
<rect x="1060.0" y="309.9" width="4.8" height="124.9" fill="#000"/>
<rect x="1061.0" y="309.9" width="2.2" height="123.9" fill="#a2a2a2"/>
<rect x="1073.9" y="311.7" width="4.8" height="125.4" fill="#000"/>
<rect x="1074.9" y="311.7" width="2.2" height="124.4" fill="#a2a2a2"/>
<rect x="1077.3" y="340" width="1.9" height="57" fill="#000"/>
<rect x="1077.8" y="359.5" width="2.2" height="17.5" fill="#000"/>
<polygon points="280.5,586.4 317.5,591.4 317.8,602.1 279.4,597.4 279.4,589.2" fill="#a2a2a2" stroke="#000" stroke-width="1.3"/>
<line x1="280.5" y1="590.2" x2="316.8" y2="595.2" stroke="#000" stroke-width="1.2"/>
<polygon points="317.5,591.6 1037.3,297.3 1037.3,308.7 317.8,602.3" fill="#a2a2a2" stroke="#000" stroke-width="1.3"/>
<line x1="317.5" y1="594.9" x2="1037.3" y2="300.6" stroke="#000" stroke-width="1.2"/>
<polygon points="1037.3,297.3 1077.9,303.2 1078.2,310.6 1076.4,314.0 1037.3,309.0" fill="#a2a2a2" stroke="#000" stroke-width="1.3"/>
<line x1="1037.3" y1="301.6" x2="1076.4" y2="307.2" stroke="#000" stroke-width="1.2"/></svg>
<div class="a" style="left:1189px;top:213px;width:12px;height:5px;border:1.5px solid #555;background:#fff"></div>
<svg class="a" style="left:1206px;top:207px" width="13" height="13" viewBox="0 0 13 13"><rect x="1" y="4" width="8" height="8" fill="#fff" stroke="#555" stroke-width="1.4"/><path d="M4 4 L4 1 L12 1 L12 9 L9 9" fill="none" stroke="#555" stroke-width="1.2"/><rect x="4" y="7" width="2" height="3" fill="#555"/></svg>
<svg class="a" style="left:1224px;top:207px" width="13" height="13" viewBox="0 0 13 13"><path d="M2 2 L11 11 M11 2 L2 11" stroke="#555" stroke-width="3"/><path d="M2 2 L11 11 M11 2 L2 11" stroke="#fff" stroke-width="1.2"/></svg>
<svg class="a" style="left:1085px;top:270px" width="130" height="115" viewBox="0 0 130 115">
<defs><radialGradient id="sh" cx="0.5" cy="0.5" r="0.5"><stop offset="0" stop-color="#d0d0d0"/><stop offset="1" stop-color="#fff" stop-opacity="0"/></radialGradient></defs>
<ellipse cx="66.5" cy="71" rx="62" ry="33" fill="#ebebeb"/>
<ellipse cx="66" cy="69.5" rx="48" ry="27" fill="#fff" stroke="#c9c9c9" stroke-width="3"/>
<ellipse cx="70" cy="66" rx="36" ry="16" fill="url(#sh)"/>
<path d="M33 29.5 L49.6 8.3 L94.4 13 L83.8 35.4 Z" fill="#f2f2f2" stroke="#999" stroke-width="0.8" stroke-dasharray="2 1.2"/>
<path d="M33 29.5 L83.8 35.4 L81.4 79 L35.4 70.8 Z" fill="#ececec" stroke="#999" stroke-width="0.8" stroke-dasharray="2 1.2"/>
<path d="M83.8 35.4 L94.4 13 L92 49.6 L81.4 79 Z" fill="#e0e0e0" stroke="#999" stroke-width="0.8" stroke-dasharray="2 1.2"/>
<text x="65" y="24" font-family="Liberation Sans" font-size="8" font-style="italic" font-weight="bold" fill="#9a9a9a" text-anchor="middle" transform="rotate(4 65 24)">TOP</text>
<text x="58" y="59" font-family="Liberation Sans" font-size="11.5" font-weight="bold" fill="#8e8e8e" text-anchor="middle" transform="rotate(5 58 59)">FRONT</text>
<text x="14" y="63" font-family="Liberation Sans" font-size="18" font-weight="bold" font-style="italic" fill="#bcbcbc" text-anchor="middle" transform="rotate(-18 14 63)">W</text>
<text x="123" y="81" font-family="Liberation Sans" font-size="17" font-weight="bold" font-style="italic" fill="#bcbcbc" text-anchor="middle" transform="rotate(12 123 81)">E</text>
<text x="47" y="111" font-family="Liberation Sans" font-size="19" font-weight="bold" font-style="italic" fill="#bcbcbc" text-anchor="middle" transform="rotate(8 47 111)">S</text>
</svg>
<div class="a" style="left:1210px;top:393px;width:30px;height:100px;border:1px solid #c9c9c9;background:linear-gradient(90deg,#f9f9f9 0,#f9f9f9 24px,#12e4f4 24px,#12e4f4 28px,#e6fcff 28px)"></div>
<svg class="a" style="left:1228px;top:395px" width="9" height="9" viewBox="0 0 9 9"><path d="M1.5 1.5 L7.5 7.5 M7.5 1.5 L1.5 7.5" stroke="#b0b0b0" stroke-width="1.2"/></svg>
<svg class="a" style="left:1212px;top:406px" width="26" height="26" viewBox="0 0 26 26"><circle cx="12.5" cy="12.5" r="11" fill="#f4f4f4" stroke="#9a9a9a" stroke-width="1.2"/><path d="M7 9 L13 6 L18 8 L18 16 L12 19 L7 17 Z" fill="#9ccaf0" stroke="#4a78a8" stroke-width="1"/><path d="M13 6 L13 13 L7 17 M13 13 L18 16" stroke="#4a78a8" stroke-width="0.8" fill="none"/></svg>
<div class="arr" style="left:1221px;top:436px;border-left-width:3px;border-right-width:3px;border-top:3px solid #999"></div>
<svg class="a" style="left:1214px;top:449px" width="20" height="20" viewBox="0 0 20 20"><circle cx="8.5" cy="8.5" r="6.5" fill="#c4e6b4" stroke="#6a9a6a" stroke-width="1.4"/><rect x="5.5" y="5.5" width="6" height="6" fill="#8fcf80"/><path d="M13 13 L18 18" stroke="#666" stroke-width="2.4"/></svg>
<div class="arr" style="left:1221px;top:474px;border-left-width:3px;border-right-width:3px;border-top:3px solid #999"></div>
<div class="a" style="left:1229px;top:483px;width:7px;height:1px;background:#aaa"></div>
<div class="arr" style="left:1229px;top:485px;border-left-width:3.5px;border-right-width:3.5px;border-top:3.5px solid #aaa"></div>
<div class="a" style="left:1239px;top:203px;width:20px;height:719px;background:linear-gradient(90deg,#eaeaea,#f4f4f4 50%,#eaeaea)"></div>
<div class="a" style="left:1244px;top:210px;width:0;height:0;border-left:4px solid transparent;border-right:4px solid transparent;border-bottom:4px solid #333"></div>
<div class="a" style="left:1244px;top:912px;width:0;height:0;border-left:4px solid transparent;border-right:4px solid transparent;border-top:4px solid #333"></div>
<div class="a" style="left:1241px;top:556px;width:15px;height:15px;border:1px solid #8e8e8e;border-radius:2px;background:linear-gradient(90deg,#f6f6f6,#d8d8d8)"></div>
<div class="a" style="left:165px;top:923px;width:1094px;height:19px;background:linear-gradient(180deg,#f2f2f2,#e8e8e8)"></div>
<div class="t t" style="left:191px;top:925px;color:#111;font-size:11px">1 : 100</div>
<svg class="a" style="left:245px;top:924px" width="180" height="16" viewBox="0 0 180 16">
<rect x="0.5" y="1.5" width="14" height="11" fill="#fff" stroke="#333"/>
<path d="M1 2 h2v2h-2z M5 2h2v2h-2z M9 2h2v2h-2z M3 4h2v2h-2z M7 4h2v2h-2z M11 4h2v2h-2z M1 6h2v2h-2z M5 6h2v2h-2z M9 6h2v2h-2z M3 8h2v2h-2z M7 8h2v2h-2z M11 8h2v2h-2z M1 10h2v2h-2z M5 10h2v2h-2z M9 10h2v2h-2z" fill="#777"/>
<path d="M22 5 L26 1.5 L36 1.5 L36 9 L32 13 L22 13 Z" fill="#a9d5ee" stroke="#1c5b9c"/>
<path d="M22 5 L32 5 L32 13 M32 5 L36 1.5" stroke="#1c5b9c" fill="none"/>
<circle cx="47" cy="6" r="4" fill="#fff" stroke="#444"/><path d="M43 12 L51 12" stroke="#444"/>
<path d="M49 8 L55 13 M55 8 L49 13" stroke="#d01010" stroke-width="2"/>
<path d="M62 5 L70 5 L72 10 L64 12 Z" fill="#fff" stroke="#444"/><circle cx="75" cy="8" r="3" fill="#fff" stroke="#2a6fb5"/><path d="M74 11 L76 11" stroke="#2a6fb5"/>
<path d="M83 3 L83 11 L93 11 M85 6 L93 6 L93 13" stroke="#2a6fb5" fill="none" stroke-width="1.2"/><path d="M90 6 L97 13 M97 6 L90 13" stroke="#d01010" stroke-width="2"/>
<path d="M104 3 L104 11 L112 11 M106 6 L112 6 L112 13" stroke="#2a6fb5" fill="none" stroke-width="1.2"/><circle cx="116" cy="8" r="3" fill="#fff" stroke="#2a6fb5"/>
<rect x="125" y="2" width="14" height="11" fill="#fff" stroke="#333"/><path d="M126 9 Q132 5 138 9 L138 12 L126 12 Z" fill="#555"/><path d="M131 6 L138 3" stroke="#2a6fb5"/>
<circle cx="153" cy="7" r="2.8" fill="#fff" stroke="#2a6fb5"/><path d="M152 11 L154 11" stroke="#2a6fb5"/>
<path d="M176 4 L172.5 7.5 L176 11 Z" fill="#333"/>
</svg>
<div class="a" style="left:818px;top:924px;width:15px;height:16px;border:1px solid #8e8e8e;border-radius:2px;background:linear-gradient(180deg,#f6f6f6,#d8d8d8)"></div>
<div class="a" style="left:1229px;top:927px;width:0;height:0;border-top:4px solid transparent;border-bottom:4px solid transparent;border-left:4px solid #333"></div>
<div id="status" class="a"></div>
<div id="fbot" class="a"></div>
<div class="t t" style="left:11px;top:948px;color:#111;font-size:11.4px">Click to select, TAB for alternates, CTRL adds, SHIFT unselects.</div>
<div class="a" style="left:1045px;top:947px;width:14px;height:14px;border:1px solid #555;background:#fff"></div>
<svg class="a" style="left:1046px;top:948px" width="13" height="13" viewBox="0 0 13 13"><path d="M2 6.5 L5 10 L11 2.5" stroke="#2a9a2a" stroke-width="2.2" fill="none"/></svg>
<div class="t t" style="left:1062px;top:948px;color:#111;font-size:11.6px">Press &amp; Drag</div>
<svg class="a" style="left:1145px;top:946px" width="18" height="17" viewBox="0 0 18 17"><path d="M1 2 L16 2 L10 9 L10 15 L7 13 L7 9 Z" fill="#fff" stroke="#333" stroke-width="1.1"/></svg>
<div class="t t" style="left:1162px;top:950px;color:#111;font-size:11px">:0</div>
</body></html>
